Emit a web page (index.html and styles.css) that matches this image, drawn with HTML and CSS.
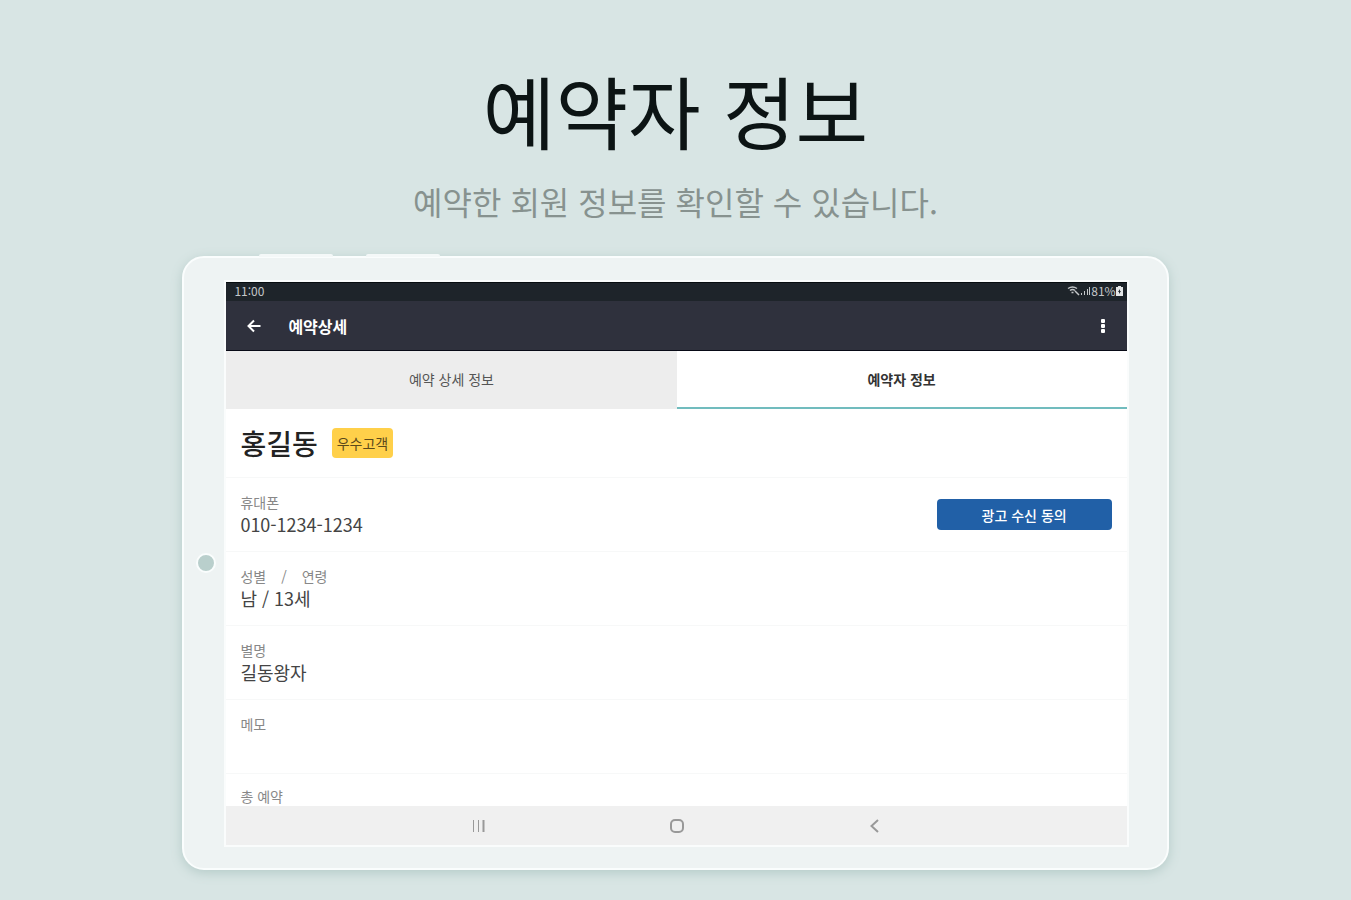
FILE: index.html
```html
<!DOCTYPE html>
<html lang="ko">
<head>
    <meta charset="UTF-8">
    <meta name="viewport" content="width=device-width, initial-scale=1.0">
    <title>예약자 정보</title>
    <link rel="stylesheet" href="styles.css">
</head>
<body>
    <!-- Heading -->
    <header class="intro">
        <h1>예약자 정보</h1>
        <p>예약한 회원 정보를 확인할 수 있습니다.</p>
    </header>

    <!-- Tablet -->
    <main class="tablet">
        <span class="side-key power"></span>
        <span class="side-key volume"></span>
        <span class="camera"></span>

        <div class="screen">
            <div class="status-bar">
                <span>11:00</span>
                <div class="status-icons">
                    <svg width="13" height="10" viewBox="0 0 13 10" fill="none" stroke="#c4c7c9">
                        <path d="M1 2.500Q5.500 -.5 10 2.500M3 4.500Q5.500 2.500 8 4.500M4.500 6.500h2M8 5l4 4" stroke-width="1.500"/>
                    </svg>
                    <svg width="11" height="10" viewBox="0 0 11 10" fill="#c4c7c9">
                        <path d="M1 7h1v2H1zM4 5h1v4H4zM7 3h1v6H7zM9 1h1v8H9z"/>
                    </svg>
                    <span>81%</span>
                    <svg width="7" height="10" viewBox="0 0 7 10" fill="#e4e6e7">
                        <path fill-rule="evenodd" d="M2 0h3v1h2v9H0V1h2zM4 3L2 6h1v2l2-3H4z"/>
                    </svg>
                </div>
            </div>

            <div class="app-bar">
                <button class="icon-button" aria-label="뒤로">
                    <svg width="16" height="16" viewBox="0 0 16 16" fill="none" stroke="#fff" stroke-width="2">
                        <path d="M14.500 8H3M8 2.500L2.500 8 8 13.500"/>
                    </svg>
                </button>
                <h2>예약상세</h2>
                <button class="icon-button" aria-label="더보기">
                    <svg width="16" height="16" viewBox="0 0 16 16" fill="#fff">
                        <rect x="6" y="1" width="4" height="4" rx="1"/>
                        <rect x="6" y="6" width="4" height="4" rx="1"/>
                        <rect x="6" y="11" width="4" height="4" rx="1"/>
                    </svg>
                </button>
            </div>

            <div class="tabs" role="tablist">
                <button role="tab" aria-selected="false">예약 상세 정보</button>
                <button class="active" role="tab" aria-selected="true">예약자 정보</button>
            </div>

            <!-- Customer info -->
            <div class="info">
                <div class="row name-row">
                    <strong>홍길동</strong>
                    <span class="badge">우수고객</span>
                </div>
                <div class="row">
                    <div>
                        <div class="label">휴대폰</div>
                        <div class="value">010-1234-1234</div>
                    </div>
                    <button class="agree">광고 수신 동의</button>
                </div>
                <div class="row">
                    <div>
                        <div class="label split"><span>성별</span><span>/</span><span>연령</span></div>
                        <div class="value">남 / 13세</div>
                    </div>
                </div>
                <div class="row">
                    <div>
                        <div class="label">별명</div>
                        <div class="value">길동왕자</div>
                    </div>
                </div>
                <div class="row">
                    <div class="label">메모</div>
                </div>
                <div class="row last">
                    <div class="label">총 예약</div>
                </div>
            </div>

            <nav class="nav-bar">
                <button class="icon-button" aria-label="최근 앱">
                    <svg width="16" height="16" viewBox="0 0 16 16" fill="none" stroke="#999">
                        <path d="M2.500 2v12M7.500 2v12"/>
                        <path d="M12.500 2v12" stroke-width="2"/>
                    </svg>
                </button>
                <button class="icon-button" aria-label="홈">
                    <svg width="16" height="16" viewBox="0 0 16 16" fill="none" stroke="#999" stroke-width="2">
                        <rect x="2" y="2" width="12" height="12" rx="4"/>
                    </svg>
                </button>
                <button class="icon-button" aria-label="이전">
                    <svg width="16" height="16" viewBox="0 0 16 16" fill="none" stroke="#999" stroke-width="2">
                        <path d="M11 2L4.500 8 11 14"/>
                    </svg>
                </button>
            </nav>
        </div>
    </main>
</body>
</html>
```
FILE: styles.css
```css
* {
    box-sizing: border-box;
}

body {
    margin: 0;
    padding: 58px 0 30px;
    background-color: #d8e5e4;
    font-family: "Noto Sans CJK KR", sans-serif;
    color: #222;
}

button {
    border: none;
    padding: 0;
    font: inherit;
    cursor: pointer;
}

.intro {
    text-align: center;
}

.intro h1 {
    margin: 0;
    font-size: 79px;
    font-weight: 400;
    line-height: 104px;
    color: #0c1414;
}

.intro p {
    margin: 15px 0 31px;
    font-size: 32px;
    line-height: 48px;
    color: #87928f;
}

.tablet {
    position: relative;
    width: 73%;
    margin: 0 auto;
    padding: 22px 38px 21px 40px;
    background-color: #eef3f3;
    border: 2px solid #fafdfd;
    border-radius: 22px;
    box-shadow: 0 3px 12px #b5cbc8;
}

.side-key {
    position: absolute;
    top: -4px;
    width: 74px;
    height: 3px;
    border-radius: 2px 2px 0 0;
    background-color: #f4f8f8;
}

.side-key.power {
    left: 75px;
}

.side-key.volume {
    left: 182px;
}

.camera {
    position: absolute;
    top: 50%;
    left: 12px;
    width: 20px;
    height: 20px;
    margin-top: -10px;
    border: 2px solid #fafdfd;
    border-radius: 50%;
    background-color: #b9cfcc;
}

.screen {
    border: 2px solid #fafcfc;
    background-color: #fff;
}

.status-bar {
    display: flex;
    justify-content: space-between;
    align-items: center;
    height: 19px;
    padding: 0 4px 2px 8px;
    background-color: #1e242a;
    border-top: 1px solid #080d10;
    font-size: 12px;
    line-height: 16px;
    color: #c4c7c9;
}

.status-icons {
    display: flex;
    align-items: center;
}

.app-bar {
    display: flex;
    align-items: center;
    height: 50px;
    padding: 0 12px 0 16px;
    background-color: #2f313d;
    border-bottom: 1px solid #080a16;
    color: #fff;
}

.app-bar h2 {
    flex: 1;
    margin: 0 0 0 22px;
    font-size: 16px;
    line-height: 24px;
    font-weight: 700;
}

.icon-button {
    display: flex;
    align-items: center;
    justify-content: center;
    width: 24px;
    height: 24px;
    background: none;
}

.tabs {
    display: flex;
    height: 58px;
}

.tabs button {
    flex: 1;
    border-bottom: 2px solid #ededed;
    background-color: #ededed;
    font-size: 14px;
    color: #555;
}

.tabs .active {
    border-color: #71bcbe;
    background-color: #fff;
    font-weight: 700;
    color: #333;
}

.row {
    display: flex;
    justify-content: space-between;
    align-items: flex-start;
    height: 74px;
    padding: 14px 15px 0 14px;
    border-bottom: 1px solid #f7f8f8;
}

.name-row {
    justify-content: flex-start;
    align-items: center;
    gap: 14px;
    height: 69px;
    padding-top: 0;
}

.name-row strong {
    font-size: 28px;
    line-height: 40px;
    font-weight: 500;
}

.row.last {
    height: 32px;
    padding-top: 12px;
    border-bottom: none;
}

.badge {
    padding: 0 5px;
    border-radius: 4px;
    background-color: #ffd04a;
    font-size: 14px;
    line-height: 30px;
    color: #5b491b;
}

.label {
    font-size: 14px;
    line-height: 20px;
    color: #888;
}

.split {
    display: flex;
    gap: 15px;
}

.value {
    font-size: 18px;
    line-height: 24px;
    color: #444;
}

.agree {
    width: 175px;
    height: 31px;
    margin-top: 7px;
    border-radius: 4px;
    background-color: #2160a7;
    font-size: 14px;
    line-height: 28px;
    font-weight: 500;
    color: #fff;
}

.nav-bar {
    display: flex;
    justify-content: center;
    align-items: center;
    gap: 174px;
    height: 39px;
    background-color: #f0f0f0;
}
```
